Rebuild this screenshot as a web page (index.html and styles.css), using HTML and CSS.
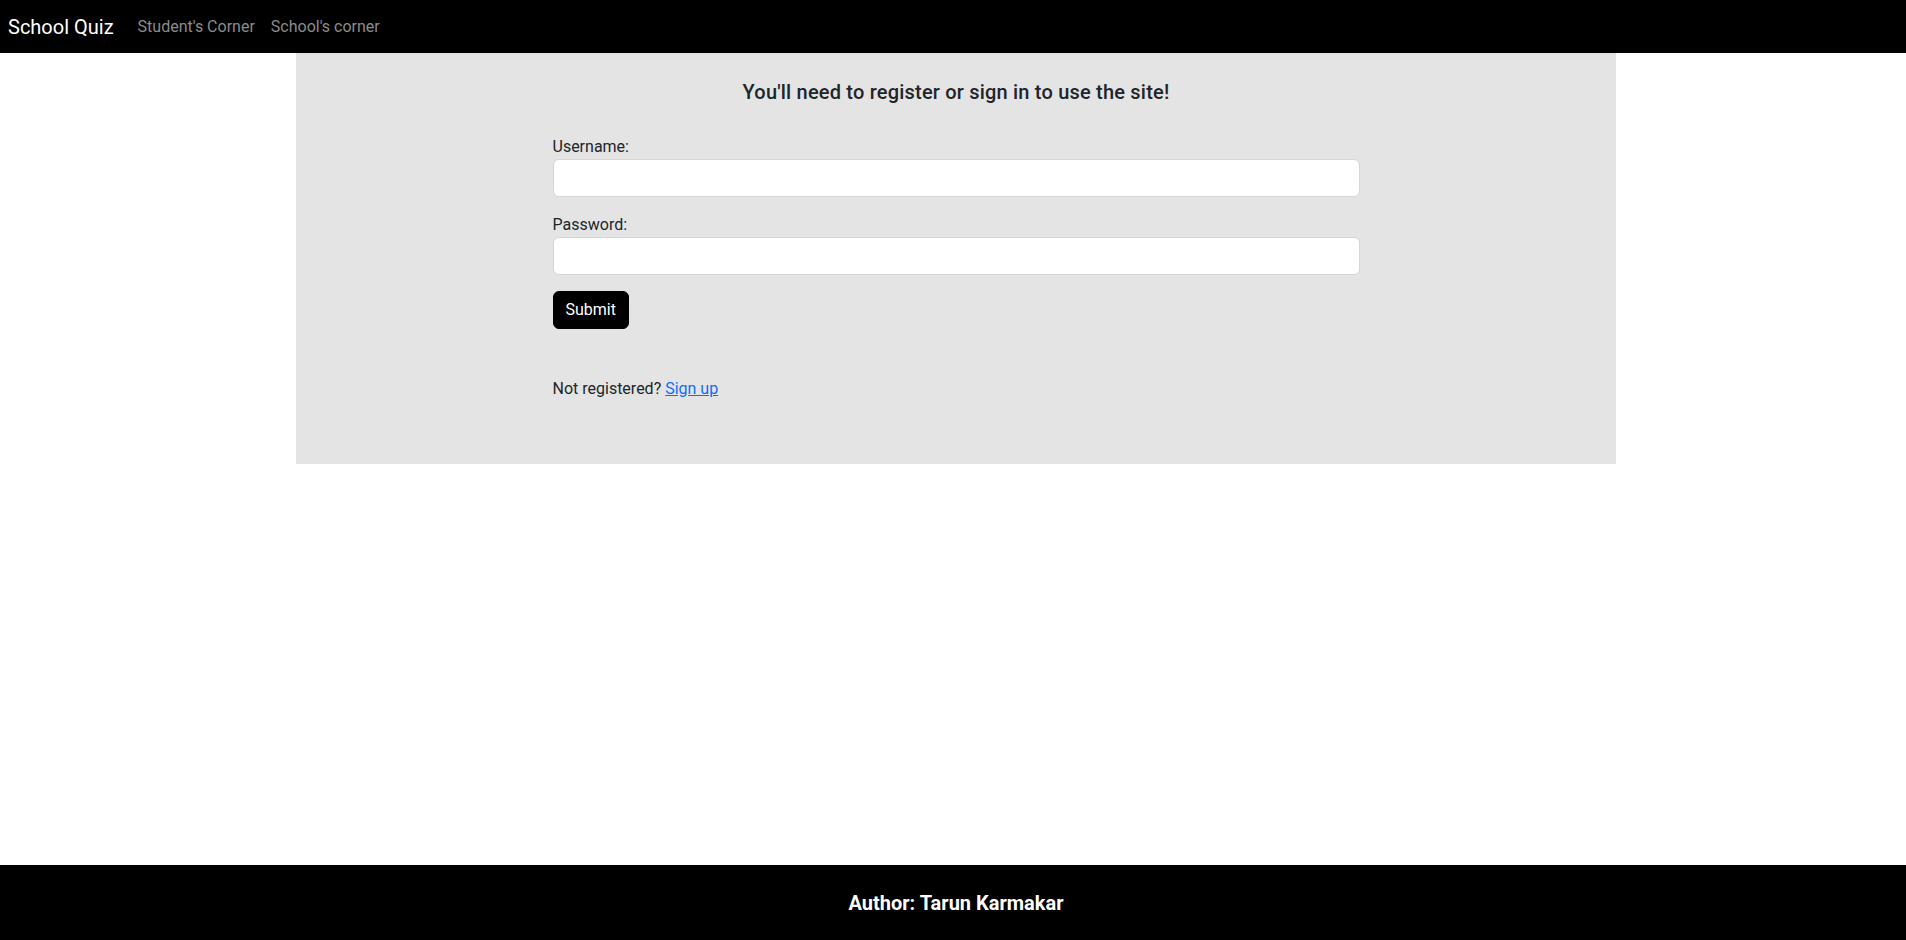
FILE: index.html
```html
<!DOCTYPE html>
<html lang="en">
<head>
<meta charset="utf-8">
<title>School Quiz</title>
<link rel="stylesheet" href="styles.css">
</head>
<body>
<div class="page">
  <nav class="navbar">
    <a class="brand" href="#">School Quiz</a>
    <ul class="nav-links">
      <li><a class="nav-link" href="#">Student's Corner</a></li>
      <li><a class="nav-link" href="#">School's corner</a></li>
    </ul>
  </nav>

  <main class="main">
    <section class="panel">
      <h5 class="panel-title">You'll need to register or sign in to use the site!</h5>
      <form class="login-form">
        <div class="field">
          <label class="field-label" for="username">Username:</label>
          <input class="field-input" type="text" id="username" name="username">
        </div>
        <div class="field">
          <label class="field-label" for="password">Password:</label>
          <input class="field-input" type="password" id="password" name="password">
        </div>
        <button class="btn-submit" type="submit">Submit</button>
        <p class="signup">Not registered? <a class="signup-link" href="#">Sign up</a></p>
      </form>
    </section>
  </main>

  <footer class="footer">
    <h5 class="footer-text">Author: Tarun Karmakar</h5>
  </footer>
</div>
</body>
</html>
```
FILE: styles.css
```css
* {
  box-sizing: border-box;
}

html, body {
  margin: 0;
  padding: 0;
}

body {
  font-family: Roboto, "Liberation Sans", Arial, sans-serif;
  font-size: 16px;
  line-height: 1.5;
  color: #212529;
  background: #fff;
}

.page {
  min-height: 100vh;
  display: flex;
  flex-direction: column;
}

/* Navbar */
.navbar {
  height: 53px;
  background: #000;
  display: flex;
  align-items: center;
  padding: 0 8px;
}

.brand {
  font-size: 20px;
  line-height: 30px;
  color: #fff;
  text-decoration: none;
  margin-right: 16px;
}

.nav-links {
  list-style: none;
  margin: 0;
  padding: 0;
  display: flex;
}

.nav-link {
  display: block;
  padding: 0 8px;
  line-height: 24px;
  color: #8c8c8c;
  text-decoration: none;
}

/* Main panel */
.main {
  padding-left: 6px;
}

.panel {
  width: 1320px;
  margin: 0 auto;
  background: #e4e4e4;
  padding: 27px 0 63px;
}

.panel-title {
  margin: 0 0 31px;
  font-size: 20px;
  font-weight: 500;
  line-height: 24px;
  text-align: center;
  letter-spacing: 0.2px;
}

.login-form {
  width: 807px;
  margin: 0 auto;
}

.field {
  margin-bottom: 16px;
}

.field-label {
  display: block;
  line-height: 24px;
}

.field-input {
  display: block;
  width: 100%;
  height: 38px;
  padding: 6px 12px;
  font: inherit;
  color: #212529;
  background: #fff;
  border: 1px solid #d3d6da;
  border-radius: 6px;
  outline: none;
}

.btn-submit {
  display: block;
  height: 38px;
  padding: 0 12px;
  font: inherit;
  line-height: 36px;
  color: #fff;
  background: #000;
  border: 1px solid #000;
  border-radius: 6px;
  cursor: pointer;
}

.signup {
  margin: 48px 0 0;
  line-height: 24px;
}

.signup-link {
  color: #0d6efd;
  text-decoration: underline;
}

/* Footer */
.footer {
  margin-top: auto;
  height: 75px;
  background: #000;
  display: flex;
  align-items: center;
  justify-content: center;
  padding-left: 6px;
}

.footer-text {
  margin: 0;
  color: #fff;
  font-size: 20px;
  font-weight: 700;
  line-height: 24px;
}
```
